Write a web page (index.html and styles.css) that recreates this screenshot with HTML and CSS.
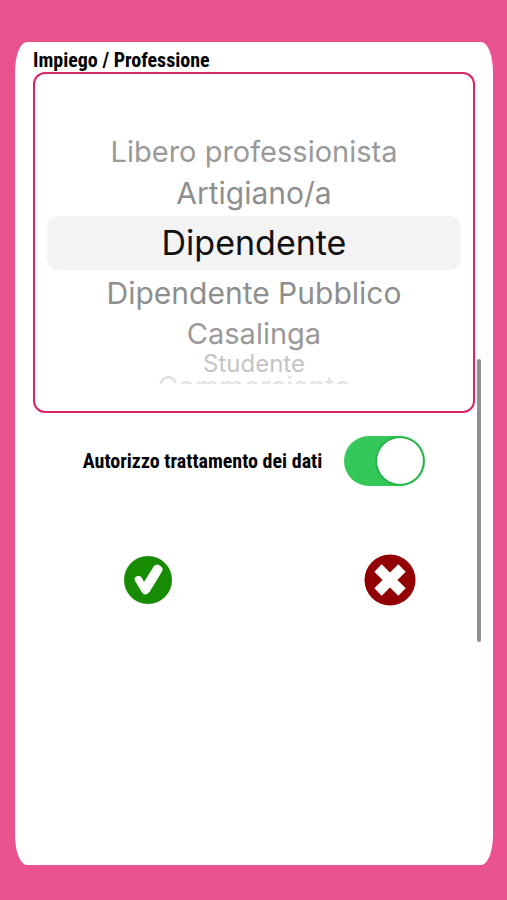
FILE: index.html
```html
<!DOCTYPE html>
<html lang="it">
<head>
<meta charset="utf-8">
<meta name="viewport" content="width=device-width, initial-scale=1">
<title>Impiego / Professione</title>
<link rel="stylesheet" href="styles.css">
</head>
<body>
<main class="card">
  <form class="form">
    <fieldset class="field">
      <legend class="label">Impiego / Professione</legend>
      <div class="picker">
        <label class="option option-far"><input type="radio" name="job">Libero professionista</label>
        <label class="option option-near"><input type="radio" name="job">Artigiano/a</label>
        <label class="option option-selected"><input type="radio" name="job" checked>Dipendente</label>
        <label class="option option-near"><input type="radio" name="job">Dipendente Pubblico</label>
        <label class="option option-far"><input type="radio" name="job">Casalinga</label>
        <label class="option option-edge"><input type="radio" name="job">Studente</label>
        <label class="option option-last"><input type="radio" name="job">Commerciante</label>
      </div>
    </fieldset>
    <div class="consent">
      <label class="label" for="consent">Autorizzo trattamento dei dati</label>
      <input class="switch" id="consent" type="checkbox" role="switch" checked>
    </div>
    <div class="actions">
      <button class="action" type="submit" aria-label="Conferma">
        <svg width="48" height="48" viewBox="0 0 48 48" aria-hidden="true">
          <circle cx="24" cy="24" r="24" fill="#188c00"/>
          <path d="M10.500 24 Q10 20.500 14 20 Q17 19.500 18 22 L20 26 L30 10 Q32 7.500 35 9 L37.500 11 Q39.500 13 38 15.500 L25.500 36 Q21.500 40.500 18 36.500 Z" fill="#fff"/>
        </svg>
      </button>
      <button class="action" type="reset" aria-label="Annulla">
        <svg width="52" height="52" viewBox="0 0 52 52" aria-hidden="true">
          <circle cx="26" cy="26" r="25.500" fill="#920004"/>
          <path d="M14 14 L38 38 M38 14 L14 38" fill="none" stroke="#fff" stroke-width="10.500"/>
        </svg>
      </button>
    </div>
  </form>
  <div class="scrollbar"></div>
</main>
</body>
</html>
```
FILE: styles.css
```css
* {
  box-sizing: border-box;
}

body {
  display: flex;
  min-height: 100vh;
  margin: 0;
  padding: 42px 14px 35px 15px;
  background: #e9528e;
  font-family: Inter, "Liberation Sans", sans-serif;
}

.card {
  position: relative;
  flex: 1;
  padding: 6px 18px;
  border-radius: 12px / 30px;
  background: #fff;
}

.field {
  min-width: 0;
  margin: 0;
  padding: 0;
  border: 0;
}

.label {
  padding: 0;
  color: #000;
  font: bold 20px/24px "Roboto Condensed", "Liberation Sans Narrow", "Liberation Sans", sans-serif;
}

.picker {
  display: flex;
  flex-direction: column;
  padding: 60px 12px 27px;
  border: 2px solid #da2561;
  border-radius: 12px;
}

.option {
  text-align: center;
  white-space: nowrap;
}

.option input {
  position: absolute;
  opacity: 0;
  pointer-events: none;
}

.option-far {
  color: #999;
  font-size: 29px;
  line-height: 36px;
}

.option-near {
  color: #8e8e8e;
  font-size: 30px;
  line-height: 46px;
}

.option-selected {
  border-radius: 12px;
  background: #f3f3f3;
  color: #111;
  font-size: 34px;
  line-height: 54px;
}

.option-edge {
  color: #c4c4c4;
  font-size: 24px;
  line-height: 24px;
}

.option-last {
  overflow: hidden;
  height: 8px;
  color: #e2e2e2;
  font-size: 28px;
  line-height: 22px;
}

.consent {
  display: flex;
  align-items: center;
  justify-content: center;
  gap: 22px;
  padding-top: 23px;
}

.switch {
  display: flex;
  justify-content: flex-end;
  width: 81px;
  height: 50px;
  margin: 0;
  padding: 2px;
  border-radius: 25px;
  background: #34c759;
  appearance: none;
}

.switch::before {
  width: 46px;
  height: 46px;
  border-radius: 50%;
  background: #fff;
  box-shadow: 0 0 2px 1px #16a336;
  content: "";
}

.actions {
  display: flex;
  align-items: center;
  justify-content: space-between;
  padding: 68px 59px 0 91px;
}

.action {
  display: flex;
  padding: 0;
  border: 0;
  background: none;
}

.scrollbar {
  position: absolute;
  top: 317px;
  right: 12px;
  width: 4px;
  height: 283px;
  border-radius: 2px;
  background: #909090;
}
```
